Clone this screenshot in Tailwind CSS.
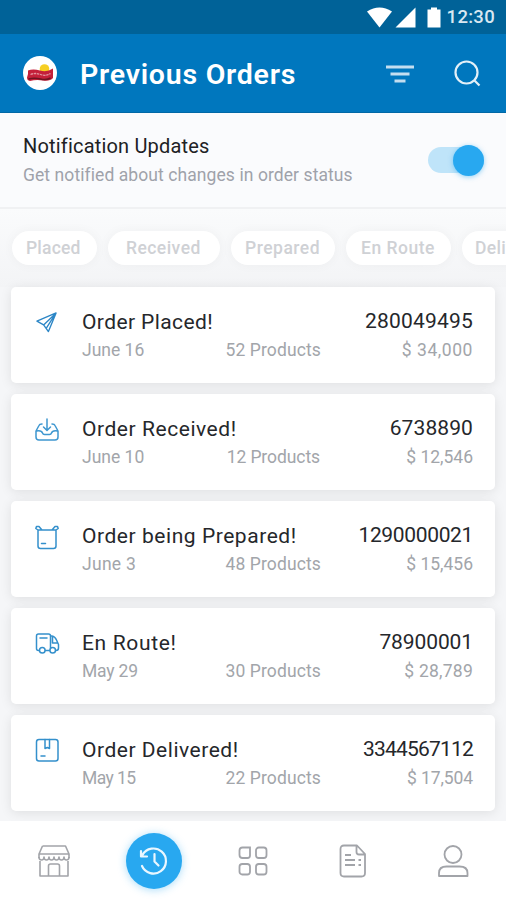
<!DOCTYPE html>
<html lang="en">
<head>
    <meta charset="UTF-8">
    <meta name="viewport" content="width=device-width, initial-scale=1.0">
    <title>Previous Orders</title>
    <script src="https://cdn.jsdelivr.net/npm/@tailwindcss/browser@4"></script>
</head>
<body class="bg-[#f5f6f8] font-['Roboto','Liberation_Sans',sans-serif]">
<div class="flex h-[900px] w-[506px] flex-col overflow-hidden">

    <!-- Status bar -->
    <div class="flex h-[34px] shrink-0 items-center justify-end bg-[#006298] pr-[11px] text-white">
        <svg class="mr-[10px] h-[21px] w-[75px]" viewBox="0 0 75 21" fill="currentColor">
            <path d="M0 4.500Q12.500-3.500 25 4.500L12.500 20.500Z"/>
            <path d="M48.500 0.500V20.500H28.500Z"/>
            <path d="M60.500 2.500h3.500v-2h6v2h3.500v18h-13z"/>
        </svg>
        <span class="-ml-[5px] text-[18.500px] font-medium leading-none tracking-[0.3px] text-[#d9e8f2]">12:30</span>
    </div>

    <!-- Header -->
    <header class="flex h-[79px] shrink-0 items-center border-b border-[#0068a6] bg-[#0077be] pl-[23px] pr-[25px]">
        <div class="flex size-[34px] items-center justify-center rounded-full bg-white">
            <svg class="h-[20px] w-[28px]" viewBox="0 0 28 20">
                <circle cx="18.500" cy="6" r="4.800" fill="#f6cf22"/>
                <path d="M2 7.500q5-2 12 0t13-2v9.500q-3 3.500-10 2.500t-13 .5q-3-.5-3-3.500 1.500-3 1-7z" fill="#c4203a"/>
                <path d="M2.500 16q6-1.500 12 0t10-1" fill="none" stroke="#6e1420" stroke-width="1.600"/>
                <path d="M4.500 11.500q5-2 10 0t10-1" fill="none" stroke="#e2929e" stroke-width="1.300" stroke-dasharray="2.500 .7"/>
            </svg>
        </div>
        <h1 class="ml-[23px] pt-[4px] text-[28.500px] font-semibold leading-none tracking-[0.750px] text-white">Previous Orders</h1>
        <svg class="ml-auto h-[19px] w-[28px]" viewBox="0 0 28 19" stroke="#c3def0" stroke-width="2.800">
            <path d="M0 3H28M4.500 10H23.500M8.500 17H19.500"/>
        </svg>
        <svg class="ml-[40px] size-[27px]" viewBox="0 0 27 27" fill="none" stroke="#e3f0f8" stroke-width="2.200">
            <circle cx="12.500" cy="12.500" r="11"/>
            <path d="M20 20L25.500 25.500"/>
        </svg>
    </header>

    <!-- Notification toggle -->
    <section class="flex h-[96px] shrink-0 items-center justify-between border-b-2 border-[#f0f1f3] bg-[#fafbfd] pl-[23px] pr-[22px]">
        <div>
            <p class="pt-px text-[20px] leading-[28px] tracking-[0.180px] text-[#202124]">Notification Updates</p>
            <p class="pt-px text-[17.500px] leading-[28px] tracking-[0.080px] text-[#9fa2aa]">Get notified about changes in order status</p>
        </div>
        <div class="flex h-[26px] w-[56px] items-center justify-end rounded-full bg-[#bfe4f9]">
            <div class="size-[31px] shrink-0 rounded-full bg-[#28a8f0] shadow-[0_1px_5px_#28a8f080]"></div>
        </div>
    </section>

    <!-- Status filters -->
    <div class="flex h-[78px] shrink-0 items-center gap-[11px] bg-linear-to-b from-[#fafbfc] to-[#f3f4f6] pl-[12px] text-[17.500px] font-medium text-[#cfd1d5]">
        <span class="flex h-[34px] w-[85px] shrink-0 items-center rounded-full bg-white pl-[14px] tracking-[0.200px] shadow-[0_0_12px_#0000000a]">Placed</span>
        <span class="flex h-[34px] w-[112px] shrink-0 items-center rounded-full bg-white pl-[18px] tracking-[0.450px] shadow-[0_0_12px_#0000000a]">Received</span>
        <span class="flex h-[34px] w-[104px] shrink-0 items-center rounded-full bg-white pl-[14px] tracking-[0.500px] shadow-[0_0_12px_#0000000a]">Prepared</span>
        <span class="flex h-[34px] w-[105px] shrink-0 items-center rounded-full bg-white pl-[15px] tracking-[0.500px] shadow-[0_0_12px_#0000000a]">En Route</span>
        <span class="flex h-[34px] w-[104px] shrink-0 items-center rounded-full bg-white pl-[13px] tracking-[0.300px] shadow-[0_0_12px_#0000000a]">Delivered</span>
    </div>

    <!-- Orders -->
    <main class="flex h-[534px] shrink-0 flex-col gap-[11px] px-[11px]">
        <article class="flex h-[96px] shrink-0 rounded-[5px] bg-white pl-[24px] pr-[22px] pt-[22px] shadow-[0_2px_12px_#00000018]">
            <svg class="mt-[2px] size-[23px] shrink-0" viewBox="0 0 24 24" fill="none" stroke="#2c86c6" stroke-width="1.400" stroke-linejoin="round">
                <path d="M2 10.500L22 2L14 21.500L9 14.500ZM22 2L9 14.500M22 2L12 17.500"/>
            </svg>
            <div class="ml-[24px] flex-1">
                <div class="flex justify-between text-[21px] leading-[26px] text-[#25272b]">
                    <span class="tracking-[0.400px]">Order Placed!</span><span class="-mt-px tracking-[0.200px]">280049495</span>
                </div>
                <div class="grid grid-cols-[100px_139px_1fr] pt-[1px] text-[17.500px] leading-[28px] text-[#a2a5aa]">
                    <span>June 16</span><span class="text-right tracking-[0.120px]">52 Products</span><span class="text-right tracking-[0.550px]">$ 34,000</span>
                </div>
            </div>
        </article>

        <article class="flex h-[96px] shrink-0 rounded-[5px] bg-white pl-[24px] pr-[22px] pt-[22px] shadow-[0_2px_12px_#00000018]">
            <svg class="mt-[2px] size-[24px] shrink-0" viewBox="0 0 24 24" fill="none" stroke="#3e97d0" stroke-width="1.500" stroke-linejoin="round" stroke-linecap="round">
                <path d="M12 1V12M8.500 9L12 12.500L15.500 9M7 6Q4.500 6 4 7.500L1 13V19Q1 22 4 22H20Q23 22 23 19V13L20 7.500Q19.500 6 17 6M1.500 13Q6.500 12 7.500 15Q8 16.500 9.500 16.500H14.500Q16 16.500 16.500 15Q17.500 12 22.500 13"/>
            </svg>
            <div class="ml-[23px] flex-1">
                <div class="flex justify-between text-[21px] leading-[26px] text-[#25272b]">
                    <span class="tracking-[0.550px]">Order Received!</span><span class="-mt-px tracking-[0.100px]">6738890</span>
                </div>
                <div class="grid grid-cols-[100px_138px_1fr] pt-[1px] text-[17.500px] leading-[28px] text-[#a2a5aa]">
                    <span>June 10</span><span class="text-right tracking-[-0.080px]">12 Products</span><span class="text-right">$ 12,546</span>
                </div>
            </div>
        </article>

        <article class="flex h-[96px] shrink-0 rounded-[5px] bg-white pl-[24px] pr-[22px] pt-[22px] shadow-[0_2px_12px_#00000018]">
            <svg class="mt-[2px] size-[26px] shrink-0" viewBox="0 0 26 26" fill="none" stroke="#3490cc" stroke-width="1.500" stroke-linejoin="round" stroke-linecap="round">
                <path d="M3 5H21V21Q21 23.500 18.500 23.500H5.500Q3 23.500 3 21ZM3 5L.800 3.500L1.500 1.500H4L7 5M21 5L23.200 3.500L22.500 1.500H20L17 5M6.500 18.500H10.500"/>
            </svg>
            <div class="ml-[21px] flex-1">
                <div class="flex justify-between text-[21px] leading-[26px] text-[#25272b]">
                    <span class="tracking-[0.550px]">Order being Prepared!</span><span class="-mt-px tracking-[-0.350px]">1290000021</span>
                </div>
                <div class="grid grid-cols-[100px_139px_1fr] pt-[1px] text-[17.500px] leading-[28px] text-[#a2a5aa]">
                    <span class="tracking-[0.300px]">June 3</span><span class="text-right tracking-[0.120px]">48 Products</span><span class="text-right">$ 15,456</span>
                </div>
            </div>
        </article>

        <article class="flex h-[96px] shrink-0 rounded-[5px] bg-white pl-[24px] pr-[22px] pt-[22px] shadow-[0_2px_12px_#00000018]">
            <svg class="mt-[1px] size-[26px] shrink-0" viewBox="0 0 26 26" fill="none" stroke="#3490cc" stroke-width="1.500" stroke-linejoin="round" stroke-linecap="round">
                <path d="M4 19.500H3.500Q1.500 19.500 1.500 17.500V5Q1.500 3 3.500 3H13.500Q15.500 3 15.500 5V17M10.500 19.500H14.500M15.500 5H17Q20 5.500 21.500 9L23.500 13.500V17Q23.500 19.500 21 19.500M17.500 6V12H22.500M5 7H12"/>
                <circle cx="7.300" cy="19.300" r="2.800"/><circle cx="17.700" cy="19.300" r="2.800"/>
            </svg>
            <div class="ml-[21px] flex-1">
                <div class="flex justify-between text-[21px] leading-[26px] text-[#25272b]">
                    <span class="tracking-[0.650px]">En Route!</span><span class="-mt-px tracking-[-0.100px]">78900001</span>
                </div>
                <div class="grid grid-cols-[100px_139px_1fr] pt-[1px] text-[17.500px] leading-[28px] text-[#a2a5aa]">
                    <span class="tracking-[-0.200px]">May 29</span><span class="text-right tracking-[0.120px]">30 Products</span><span class="text-right tracking-[0.250px]">$ 28,789</span>
                </div>
            </div>
        </article>

        <article class="flex h-[96px] shrink-0 rounded-[5px] bg-white pl-[24px] pr-[22px] pt-[22px] shadow-[0_2px_12px_#00000018]">
            <svg class="mt-[1px] size-[26px] shrink-0" viewBox="0 0 26 26" fill="none" stroke="#3490cc" stroke-width="1.500" stroke-linejoin="round" stroke-linecap="round">
                <rect x="1.500" y="1.500" width="21.500" height="21.500" rx="2.500"/>
                <path d="M10 1.500V10.500L12.300 9.500L14.500 10.500V1.500M6 18H10"/>
            </svg>
            <div class="ml-[21px] flex-1">
                <div class="flex justify-between text-[21px] leading-[26px] text-[#25272b]">
                    <span class="tracking-[0.520px]">Order Delivered!</span><span class="-mt-px tracking-[-0.800px]">3344567112</span>
                </div>
                <div class="grid grid-cols-[100px_139px_1fr] pt-[1px] text-[17.500px] leading-[28px] text-[#a2a5aa]">
                    <span class="tracking-[-0.600px]">May 15</span><span class="text-right tracking-[0.120px]">22 Products</span><span class="text-right tracking-[-0.100px]">$ 17,504</span>
                </div>
            </div>
        </article>
    </main>

    <!-- Bottom navigation -->
    <nav class="z-10 grid h-[79px] w-full shrink-0 grid-cols-5 place-items-center bg-white pl-[4px] pr-[3px] text-[#a2a4a9]">
        <svg class="size-[34px]" viewBox="0 0 34 34" fill="none" stroke="currentColor" stroke-width="1.600" stroke-linejoin="round">
            <path d="M5.500 2H28.500L32 10V14M2 14V10L5.500 2M2 10H32M3 17V32H31V17M11.500 32V22Q11.500 20 13.500 20H20.500Q22.500 20 22.500 22V32"/>
            <path d="M2 13Q2 16 4.500 16T7 13Q7 16 9.500 16T12 13Q12 16 14.500 16T17 13Q17 16 19.500 16T22 13Q22 16 24.500 16T27 13Q27 16 29.500 16T32 13"/>
        </svg>
        <div class="flex size-[56px] items-center justify-center rounded-full bg-[#28a8f0] shadow-[0_1px_8px_#28a8f066]">
            <svg class="size-[30px]" viewBox="0 0 30 30" fill="none" stroke="#eaf7ff" stroke-width="2.200" stroke-linecap="round" stroke-linejoin="round">
                <path d="M3 20A12.500 12.500 0 1 0 3.500 9M2 5V10.500H8M15.500 8V15.500L19.500 19.500"/>
            </svg>
        </div>
        <svg class="size-[30px]" viewBox="0 0 30 30" fill="none" stroke="currentColor" stroke-width="1.800">
            <path d="M4.500 1.500H12V9.500Q12 12 9.500 12H4.500Q1.500 12 1.500 9V4.500Q1.500 1.500 4.500 1.500Z"/>
            <rect x="18" y="1.500" width="10.500" height="10.500" rx="2.800"/>
            <rect x="1.500" y="18" width="10.500" height="10.500" rx="2.800"/>
            <rect x="18" y="18" width="10.500" height="10.500" rx="2.800"/>
        </svg>
        <svg class="h-[34px] w-[28px]" viewBox="0 0 28 34" fill="none" stroke="currentColor" stroke-width="1.800" stroke-linejoin="round">
            <path d="M5 1.500H18L26 10V29Q26 32.500 22.500 32.500H5Q1.500 32.500 1.500 29V5Q1.500 1.500 5 1.500ZM17.500 2V8Q17.500 10.500 20 10.500H25.500M6 11H12M6 16H16M6 21H16M19.500 16H22M19.500 21H22"/>
        </svg>
        <svg class="h-[34px] w-[32px]" viewBox="0 0 32 34" fill="none" stroke="currentColor" stroke-width="1.800" stroke-linejoin="round">
            <circle cx="16" cy="10.500" r="8.500"/>
            <path d="M2 32V29Q2 22.500 9.500 22.500H22.500Q30.500 22.500 30.500 29V32Z"/>
        </svg>
    </nav>
</div>
</body>
</html>
